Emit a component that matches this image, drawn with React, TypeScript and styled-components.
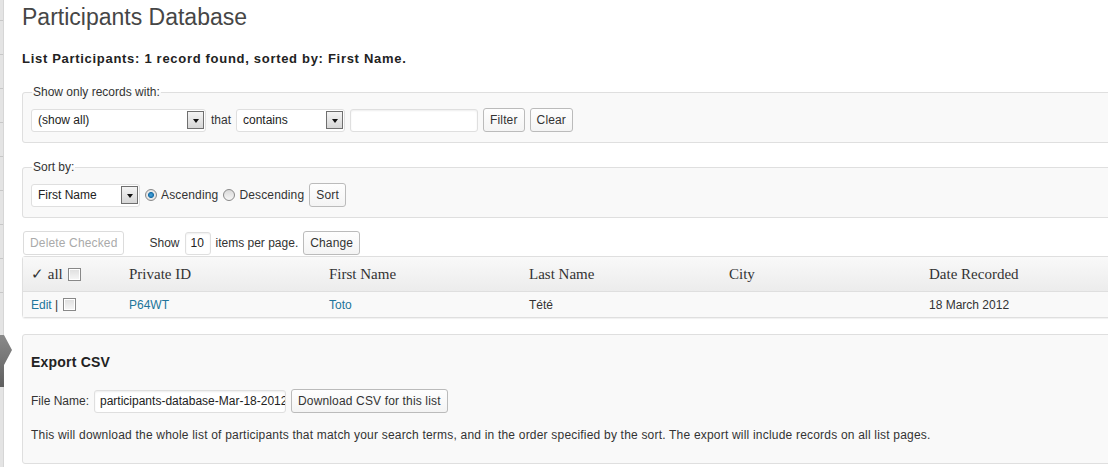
import styled, { createGlobalStyle } from 'styled-components';

const GlobalStyle = createGlobalStyle`
  html, body {
    margin: 0;
    padding: 0;
    background: #fff;
    overflow: hidden;
  }
  body {
    font-family: "Liberation Sans", Arial, sans-serif;
    font-size: 12px;
    color: #333;
  }
`;

const columns = [
  { key: 'id', label: 'Private ID', width: 200 },
  { key: 'first', label: 'First Name', width: 200 },
  { key: 'last', label: 'Last Name', width: 200 },
  { key: 'city', label: 'City', width: 200 },
  { key: 'date', label: 'Date Recorded', width: 200 },
];

const record = {
  id: 'P64WT',
  first: 'Toto',
  last: 'Tété',
  city: '',
  date: '18 March 2012',
};

const App = () => {
  return (
    <>
      <GlobalStyle />
      <Page>
        <SideStrip>
          <MenuLine />
          <MenuLine />
          <MenuLine />
          <MenuLine />
          <MenuLine />
          <MenuLine />
          <MenuLine />
          <MenuLine />
          <MenuLine />
          <CurrentArrow width="14" height="52" viewBox="0 0 14 52">
            <defs>
              <linearGradient id="arrowGrad" x1="0" y1="0" x2="0" y2="1">
                <stop offset="0" stopColor="#8a8a8a" />
                <stop offset="1" stopColor="#5f5f5f" />
              </linearGradient>
            </defs>
            <path d="M0 0 H4 L12 15 L4 30 V52 H0 Z" fill="url(#arrowGrad)" />
          </CurrentArrow>
        </SideStrip>
        <Content>
          <Title>Participants Database</Title>
          <Summary>List Participants: 1 record found, sorted by: First Name.</Summary>

          <Fieldset>
            <Legend>Show only records with:</Legend>
            <ControlRow>
              <FakeSelect width={175}>
                <span>(show all)</span>
                <SelectArrow />
              </FakeSelect>
              <Label>that</Label>
              <FakeSelect width={109}>
                <span>contains</span>
                <SelectArrow />
              </FakeSelect>
              <TextInput width={128} />
              <Button>Filter</Button>
              <Button>Clear</Button>
            </ControlRow>
          </Fieldset>

          <Fieldset>
            <Legend>Sort by:</Legend>
            <ControlRow>
              <FakeSelect width={109}>
                <span>First Name</span>
                <SelectArrow />
              </FakeSelect>
              <RadioLabel>
                <Radio checked />
                Ascending
              </RadioLabel>
              <RadioLabel>
                <Radio />
                Descending
              </RadioLabel>
              <Button>Sort</Button>
            </ControlRow>
          </Fieldset>

          <PagerRow>
            <Button disabled>Delete Checked</Button>
            <PageSize>
              Show
              <TextInput width={26} as="div">10</TextInput>
              items per page.
              <Button>Change</Button>
            </PageSize>
          </PagerRow>

          <Table>
            <colgroup>
              <col style={{ width: 100 }} />
              {columns.map((c) => (
                <col key={c.key} style={{ width: c.width }} />
              ))}
              <col />
            </colgroup>
            <thead>
              <tr>
                <HeadCell>
                  <AllCheck>
                    <span>✓ all</span>
                    <Checkbox />
                  </AllCheck>
                </HeadCell>
                {columns.map((c) => (
                  <HeadCell key={c.key}>{c.label}</HeadCell>
                ))}
                <HeadCell />
              </tr>
            </thead>
            <tbody>
              <tr>
                <Cell>
                  <AllCheck>
                    <span>
                      <Link>Edit</Link> |
                    </span>
                    <Checkbox />
                  </AllCheck>
                </Cell>
                <Cell>
                  <Link>{record.id}</Link>
                </Cell>
                <Cell>
                  <Link>{record.first}</Link>
                </Cell>
                <Cell>{record.last}</Cell>
                <Cell>{record.city}</Cell>
                <Cell>{record.date}</Cell>
                <Cell />
              </tr>
            </tbody>
          </Table>

          <ExportBox>
            <ExportTitle>Export CSV</ExportTitle>
            <ExportRow>
              File Name:
              <TextInput width={192} as="div">
                participants-database-Mar-18-2012
              </TextInput>
              <Button>Download CSV for this list</Button>
            </ExportRow>
            <Note>
              This will download the whole list of participants that match your search terms, and in
              the order specified by the sort. The export will include records on all list pages.
            </Note>
          </ExportBox>
        </Content>
      </Page>
    </>
  );
};

const Page = styled.div`
  display: flex;
  min-height: 467px;
  width: 1140px;
`;

const SideStrip = styled.div`
  position: relative;
  width: 3px;
  flex-shrink: 0;
  background: #e4e4e4;
  border-right: 1px solid #d6d6d6;
  display: flex;
  flex-direction: column;
  gap: 33px;
  padding-top: 20px;
`;

const MenuLine = styled.div`
  height: 1px;
  background: #c8c8c8;
`;

const CurrentArrow = styled.svg`
  position: absolute;
  left: 0;
  top: 335px;
`;

const Content = styled.div`
  flex: 1;
  padding-left: 18px;
`;

const Title = styled.h2`
  margin: 0;
  padding-top: 3px;
  font-size: 23px;
  line-height: 29px;
  font-weight: normal;
  color: #464646;
`;

const Summary = styled.h3`
  margin: 19px 0 0;
  font-size: 13px;
  line-height: 16px;
  letter-spacing: 0.7px;
  font-weight: bold;
  color: #222;
`;

const Fieldset = styled.fieldset`
  margin: 18px 0 0;
  padding: 9px 8px 10px;
  border: 1px solid #dfdfdf;
  border-radius: 3px;
  background: #f9f9f9;
  min-width: 0;

  & + & {
    margin-top: 17px;
  }
`;

const Legend = styled.legend`
  padding: 0 1px;
  margin-left: 1px;
  font-size: 12px;
  line-height: 14px;
  color: #333;
`;

const ControlRow = styled.div`
  display: flex;
  align-items: center;
  gap: 5px;
  height: 24px;
`;

const FakeSelect = styled.div<{ width: number }>`
  box-sizing: border-box;
  width: ${(p) => p.width}px;
  height: 23px;
  display: flex;
  align-items: center;
  justify-content: space-between;
  padding: 0 1px 0 6px;
  background: #fff;
  border: 1px solid #dfdfdf;
  border-radius: 3px;
  font-size: 12px;
  color: #222;
`;

const SelectArrow = styled.span`
  box-sizing: border-box;
  width: 17px;
  height: 18px;
  border: 1px solid #6f6f6f;
  background: linear-gradient(#f4f4f4, #d6d6d6);
  display: flex;
  align-items: center;
  justify-content: center;

  &::after {
    content: '';
    border-left: 3.5px solid transparent;
    border-right: 3.5px solid transparent;
    border-top: 4px solid #111;
    margin-top: 1px;
  }
`;

const Label = styled.span`
  font-size: 12px;
  color: #333;
`;

const TextInput = styled.input<{ width: number }>`
  box-sizing: border-box;
  width: ${(p) => p.width}px;
  height: 23px;
  display: flex;
  align-items: center;
  padding: 0 5px;
  overflow: hidden;
  white-space: nowrap;
  background: #fff;
  border: 1px solid #dfdfdf;
  border-radius: 3px;
  box-shadow: inset 0 1px 2px rgba(0, 0, 0, 0.07);
  font-family: "Liberation Sans", Arial, sans-serif;
  font-size: 12px;
  color: #222;
  outline: none;
`;

const Button = styled.button`
  box-sizing: border-box;
  height: 24px;
  padding: 0 6px;
  background: linear-gradient(#fefefe, #f4f4f4);
  border: 1px solid #bbb;
  border-radius: 3px;
  font-family: "Liberation Sans", Arial, sans-serif;
  font-size: 12px;
  letter-spacing: 0.15px;
  color: #333;
  white-space: nowrap;

  &:disabled {
    color: #aaa;
    border-color: #dcdcdc;
    background: #fff;
  }
`;

const RadioLabel = styled.label`
  display: flex;
  align-items: center;
  gap: 4px;
  font-size: 12px;
  letter-spacing: 0.15px;
  color: #333;
`;

const Radio = styled.span<{ checked?: boolean }>`
  box-sizing: border-box;
  width: 12px;
  height: 12px;
  border-radius: 50%;
  border: 1px solid #888;
  background: ${(p) =>
    p.checked
      ? 'radial-gradient(circle, #4aa8e0 0, #1a6fa8 2.6px, #e9e9e9 3.4px, #dcdcdc 100%)'
      : 'linear-gradient(#d9d9d9, #f6f6f6)'};
`;

const PagerRow = styled.div`
  display: flex;
  align-items: center;
  gap: 25px;
  margin-top: 13px;
  padding-left: 1px;
`;

const PageSize = styled.div`
  display: flex;
  align-items: center;
  gap: 5px;
  font-size: 12px;
  color: #333;
`;

const Table = styled.table`
  width: 100%;
  margin-top: 1px;
  border-collapse: separate;
  border-spacing: 0;
  table-layout: fixed;
  border: 1px solid #dfdfdf;
  border-radius: 3px;
  box-shadow: 0 1px 1px rgba(0, 0, 0, 0.06);
`;

const HeadCell = styled.th`
  height: 34px;
  padding: 0 6px;
  text-align: left;
  font-family: "Liberation Serif", "Times New Roman", serif;
  font-size: 15px;
  font-weight: normal;
  color: #333;
  background: linear-gradient(#f9f9f9, #ececec);
  border-bottom: 1px solid #dfdfdf;

  &:first-child {
    padding-left: 8px;
  }
`;

const Cell = styled.td`
  height: 25px;
  padding: 0 6px;
  font-size: 12px;
  color: #333;
  background: #f9f9f9;

  &:first-child {
    padding-left: 8px;
  }
`;

const AllCheck = styled.span`
  display: flex;
  align-items: center;
  gap: 5px;
`;

const Checkbox = styled.span`
  box-sizing: border-box;
  width: 13px;
  height: 13px;
  border: 1px solid #888;
  background: linear-gradient(#dedede, #f7f7f7);
  box-shadow: inset 0 0 0 1px #fff;
`;

const Link = styled.a`
  color: #21759b;
  text-decoration: none;
`;

const ExportBox = styled.div`
  margin-top: 16px;
  padding: 18px 8px 20px;
  border: 1px solid #dfdfdf;
  border-radius: 3px;
  background: #f9f9f9;
`;

const ExportTitle = styled.h3`
  margin: 0;
  font-size: 14px;
  line-height: 18px;
  letter-spacing: 0.2px;
  font-weight: bold;
  color: #222;
`;

const ExportRow = styled.div`
  display: flex;
  align-items: center;
  gap: 5px;
  margin-top: 18px;
  font-size: 12px;
  color: #333;
`;

const Note = styled.p`
  margin: 15px 0 0;
  font-size: 12px;
  line-height: 15px;
  letter-spacing: 0.2px;
  color: #333;
`;

export default App;
